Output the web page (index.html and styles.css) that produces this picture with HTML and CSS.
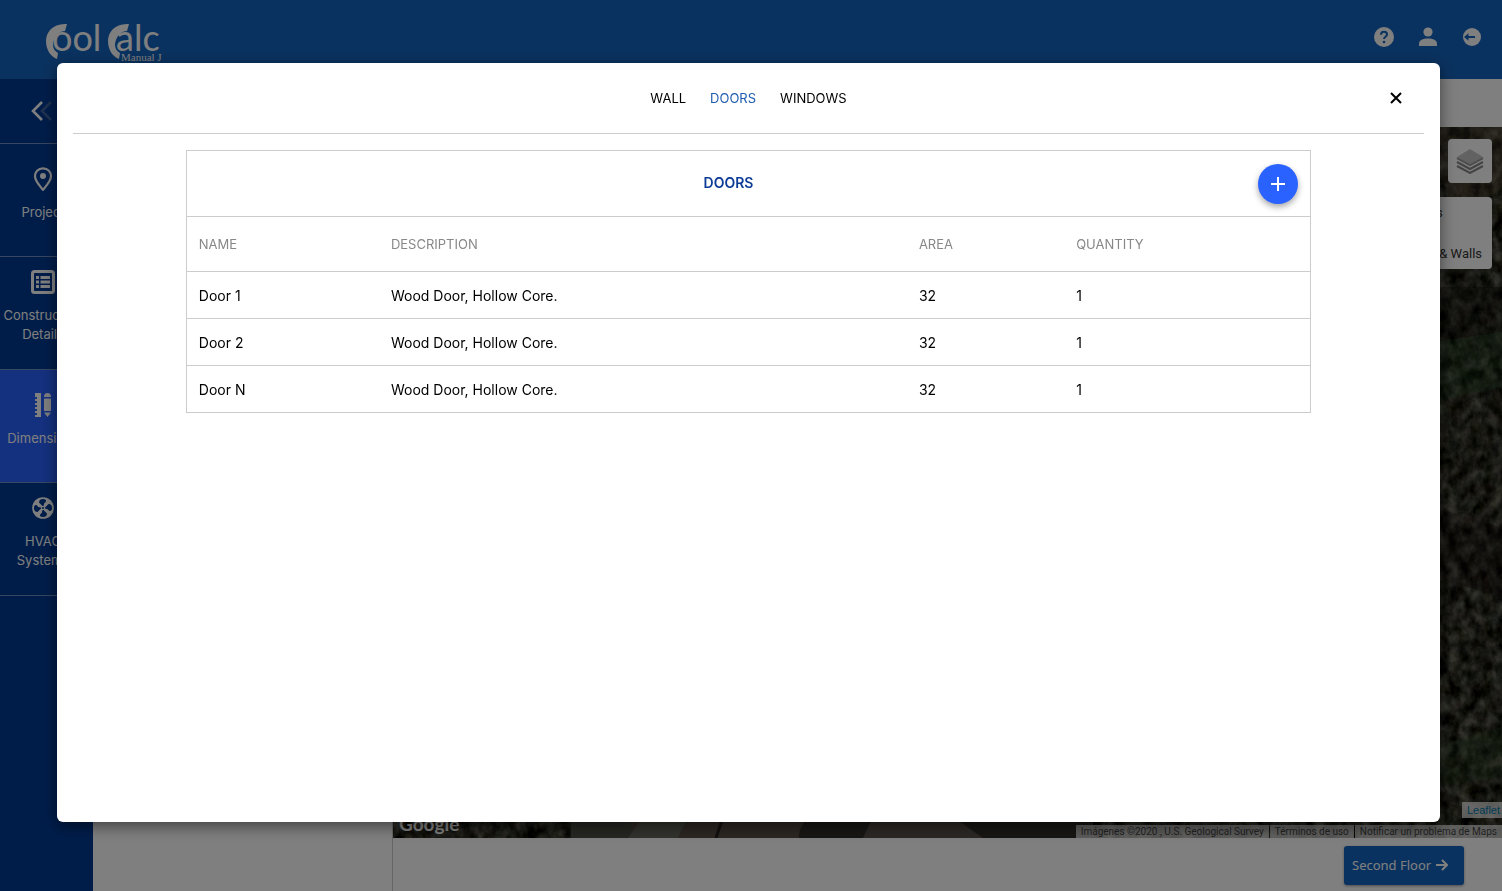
FILE: index.html
```html
<!DOCTYPE html>
<html lang="en">
<head>
  <meta charset="UTF-8" />
  <meta name="viewport" content="width=device-width, initial-scale=1.0" />
  <title>Cool Calc - Doors</title>
  <link rel="stylesheet" href="styles.css">
</head>
<body>
  <div class="app">
    <header class="topbar">
      <a class="logo" href="#" aria-label="Cool Calc Manual J">
        <svg width="130" height="60" viewBox="0 0 130 60">
          <path id="swoosh" d="M23 10C9 9 2 18 2 27C2 36 7 43 13 45L14 39C9 36 8 31 10 26C12 20 17 17 21 17Z" fill="#fff" />
          <use href="#swoosh" x="62" />
          <text class="logo-word" x="8" y="37">ool</text>
          <text class="logo-word" x="72" y="37">alc</text>
          <text class="logo-sub" x="77" y="47">Manual J</text>
        </svg>
      </a>
      <nav class="top-actions">
        <button class="icon-button" aria-label="Help">
          <svg width="20" height="20" viewBox="0 0 20 20">
            <circle cx="10" cy="10" r="10" fill="#fff" />
            <path d="M7 7.8C7 3.8 13 4 13 7.6C13 9.7 10 9.8 10 12" fill="none" stroke="#1565c0" stroke-width="2" />
            <circle cx="10" cy="15" r="1.3" fill="#1565c0" />
          </svg>
        </button>
        <button class="icon-button" aria-label="Account">
          <svg width="20" height="20" viewBox="0 0 20 20">
            <circle cx="10" cy="5" r="4.6" fill="#fff" />
            <path d="M1 19V17C1 13 5 11.500 10 11.500S19 13 19 17V19Z" fill="#fff" />
          </svg>
        </button>
        <button class="icon-button" aria-label="Log out">
          <svg width="20" height="20" viewBox="0 0 20 20">
            <circle cx="10" cy="10" r="9" fill="#fff" />
            <path d="M2 10L6.500 6.200V9H13V11H6.500V13.800Z" fill="#1565c0" />
          </svg>
        </button>
      </nav>
    </header>

    <div class="layout">
      <aside class="sidebar">
        <button class="collapse" aria-label="Collapse menu">
          <svg width="22" height="20" viewBox="0 0 22 20" fill="none" stroke-width="2.600">
            <path d="M20 1L11 10L20 19" stroke="#3f649f" />
            <path d="M11 1L2 10L11 19" stroke="#fff" />
          </svg>
        </button>
        <a class="side-item" href="#">
          <svg width="24" height="24" viewBox="0 0 24 24">
            <path d="M12 1.300C7 1.300 4 5 4 9.300C4 14 8.500 18.500 12 22.800C15.500 18.500 20 14 20 9.300C20 5 17 1.300 12 1.300Z" fill="none" stroke="#fff" stroke-width="2.200" />
            <circle cx="12" cy="9" r="3" fill="#fff" />
          </svg>
          <span>Project</span>
        </a>
        <a class="side-item" href="#">
          <svg width="24" height="24" viewBox="0 0 24 24" fill="none" stroke="#fff">
            <rect x="1.500" y="1.500" width="21" height="21" rx="2" stroke-width="3" />
            <path d="M5 7.500H8M5 12H8M5 16.500H8M9.500 7.500H19M9.500 12H19M9.500 16.500H19" stroke-width="3" />
          </svg>
          <span>Construction Details</span>
        </a>
        <a class="side-item active" href="#">
          <svg width="24" height="24" viewBox="0 0 24 24" fill="#fff">
            <path d="M4 0H10V24H4V22H6V20H4V18H6V16H4V14H6V12H4V10H6V8H4V6H6V4H4Z" />
            <path d="M13 4Q13 0 16.500 0T20 4ZM13 5.500H20V18H13ZM13 19.500H20L16.500 24Z" />
          </svg>
          <span>Dimensions</span>
        </a>
        <a class="side-item" href="#">
          <svg width="24" height="24" viewBox="0 0 24 24">
            <circle cx="12" cy="12" r="10.800" fill="#fff" />
            <g fill="#003a94">
              <path id="blade" d="M11.500 10L8 6.500Q8 3 12 3Q15.500 3 15 5.500Q12.500 7 12.500 10Z" />
              <use href="#blade" transform="rotate(90 12 12)" />
              <use href="#blade" transform="rotate(180 12 12)" />
              <use href="#blade" transform="rotate(270 12 12)" />
              <circle cx="12" cy="12" r="1" />
            </g>
          </svg>
          <span>HVAC Systems</span>
        </a>
      </aside>

      <section class="details"></section>

      <main class="workspace">
        <div class="toolbar"></div>
        <div class="map">
          <svg class="imagery" viewBox="0 0 1109 711" preserveAspectRatio="none">
            <filter id="ground" x="0" y="0" width="100%" height="100%" color-interpolation-filters="sRGB">
              <feTurbulence type="fractalNoise" baseFrequency="0.09 0.07" numOctaves="5" seed="8" />
              <feColorMatrix values="0.6 0.3 0 0 -0.27  0.6 0.25 0.05 0 -0.27  0.6 0.2 0 0 -0.26  0 0 0 0 1" />
            </filter>
            <rect width="1109" height="711" filter="url(#ground)" />
            <g opacity="0.3">
              <path d="M1040 0H1109V60L1070 90L1040 40Z" fill="#6e5a48" />
              <path d="M1040 160H1109V210L1040 225Z" fill="#000" />
              <path d="M1040 215L1109 205V260L1040 275Z" fill="#1d4a22" />
              <path d="M1040 380L1109 400V470L1040 450Z" fill="#180c0e" />
              <path d="M1040 620L1109 600V650L1040 660Z" fill="#284a26" />
            </g>
            <path d="M178 690H700V711H178Z" fill="#5a4d43" />
            <path d="M178 690H235L243 711H178Z" fill="#4b4c44" />
            <path d="M250 690H295L285 711H235Z" fill="#62625a" />
            <path d="M330 690L323 711" stroke="#25211d" stroke-width="3" />
            <path d="M406 711Q405 700 416 690H700V711Z" fill="#302d28" />
            <path d="M480 690H560L590 711H470Z" fill="#57504a" />
          </svg>
          <button class="layers" aria-label="Layers">
            <svg width="28" height="26" viewBox="0 0 28 26">
              <path d="M1 18L14 25L27 18M1 14L14 21L27 14" fill="none" stroke="#888" stroke-width="2" />
              <path d="M1 10L14 17L27 10" fill="none" stroke="#999" stroke-width="2" />
              <path d="M14 1L27 9L14 16L1 9Z" fill="#c4c4c4" />
            </svg>
          </button>
          <div class="legend">
            <span>Floors</span>
            <span>Floor &amp; Walls</span>
          </div>
          <span class="google">Google</span>
          <a class="leaflet" href="#">Leaflet</a>
          <div class="attribution">
            <span>Imágenes ©2020 , U.S. Geological Survey</span>
            <a href="#">Términos de uso</a>
            <a href="#">Notificar un problema de Maps</a>
          </div>
        </div>
        <footer class="actions">
          <button class="next-button">
            Second Floor
            <svg width="12" height="12" viewBox="0 0 12 12" fill="none" stroke="#fff" stroke-width="2">
              <path d="M0 6H11M6 1L11 6L6 11" />
            </svg>
          </button>
        </footer>
      </main>
    </div>
  </div>

  <div class="overlay">
    <div class="modal" role="dialog" aria-modal="true" aria-label="Doors">
      <div class="modal-header">
        <nav class="tabs">
          <a href="#">WALL</a>
          <a class="selected" href="#">DOORS</a>
          <a href="#">WINDOWS</a>
        </nav>
        <button class="close" aria-label="Close">
          <svg width="12" height="12" viewBox="0 0 12 12" fill="none" stroke="#000" stroke-width="2">
            <path d="M1 1L11 11M11 1L1 11" />
          </svg>
        </button>
      </div>

      <div class="card">
        <div class="card-header">
          <h2>DOORS</h2>
          <button class="add" aria-label="Add door">
            <svg width="14" height="14" viewBox="0 0 14 14" stroke="#fff" stroke-width="2">
              <path d="M7 0V14M0 7H14" />
            </svg>
          </button>
        </div>
        <table class="doors">
          <thead>
            <tr>
              <th class="col-name">NAME</th>
              <th class="col-description">DESCRIPTION</th>
              <th class="col-area">AREA</th>
              <th>QUANTITY</th>
            </tr>
          </thead>
          <tbody>
            <tr>
              <td>Door 1</td>
              <td>Wood Door, Hollow Core.</td>
              <td>32</td>
              <td>1</td>
            </tr>
            <tr>
              <td>Door 2</td>
              <td>Wood Door, Hollow Core.</td>
              <td>32</td>
              <td>1</td>
            </tr>
            <tr>
              <td>Door N</td>
              <td>Wood Door, Hollow Core.</td>
              <td>32</td>
              <td>1</td>
            </tr>
          </tbody>
        </table>
      </div>
    </div>
  </div>
</body>
</html>
```

FILE: styles.css
```css
* {
  margin: 0;
  padding: 0;
  box-sizing: border-box;
}

body {
  font-family: Inter, sans-serif;
  font-size: 14px;
  color: #000;
  background: #fff;
  overflow: hidden;
}

a {
  color: inherit;
  text-decoration: none;
}

button {
  font: inherit;
  color: inherit;
  background: none;
  border: none;
  cursor: pointer;
}

svg {
  display: block;
}

.app {
  display: flex;
  flex-direction: column;
  height: 100vh;
}

/* top bar */
.topbar {
  display: flex;
  justify-content: space-between;
  padding: 14px 20px 0 44px;
  height: 79px;
  background: #1565c0;
}

.logo-word {
  font-family: Lato, sans-serif;
  font-size: 36px;
  fill: #fff;
}

.logo-sub {
  font-family: "Liberation Serif", serif;
  font-size: 11px;
  fill: #fff;
}

.top-actions {
  display: flex;
  align-items: center;
  gap: 24px;
  height: 46px;
}

/* sidebar */
.layout {
  display: flex;
  flex: 1;
  min-height: 0;
}

.sidebar {
  width: 93px;
  background: #003a94;
  color: #fff;
}

.collapse {
  display: flex;
  align-items: center;
  width: 100%;
  height: 65px;
  padding-left: 31px;
  border-bottom: 1px solid #6f8fc0;
}

.side-item {
  display: flex;
  flex-direction: column;
  align-items: center;
  justify-content: center;
  gap: 12px;
  height: 113px;
  padding: 0 7px 12px 0;
  border-bottom: 1px solid #6f8fc0;
  font-size: 13px;
  line-height: 19px;
  text-align: center;
}

.side-item.active {
  background: #2962ff;
}

.details {
  width: 300px;
  border-right: 1px solid #ccc;
}

/* map */
.workspace {
  display: flex;
  flex-direction: column;
  flex: 1;
}

.toolbar {
  height: 48px;
}

.map {
  position: relative;
  flex: 1;
  overflow: hidden;
  background: #34332d;
}

.imagery {
  position: absolute;
  width: 100%;
  height: 100%;
}

.layers {
  position: absolute;
  top: 12px;
  right: 10px;
  display: grid;
  place-items: center;
  width: 44px;
  height: 44px;
  background: #fff;
  border-radius: 4px;
}

.legend {
  position: absolute;
  top: 70px;
  right: 10px;
  display: flex;
  flex-direction: column;
  justify-content: space-between;
  height: 72px;
  padding: 7px 10px 6px;
  background: #fff;
  border-radius: 4px;
  font-family: Roboto, sans-serif;
  font-size: 13px;
  line-height: 18px;
  color: #333;
}

.google {
  position: absolute;
  left: 6px;
  bottom: 3px;
  font-family: Lato, sans-serif;
  font-size: 19px;
  font-weight: bold;
  line-height: 22px;
  color: #fff;
}

.leaflet {
  position: absolute;
  right: 0;
  bottom: 20px;
  padding: 0 2px 0 5px;
  background: rgba(255, 255, 255, 0.7);
  font-family: "Liberation Sans", sans-serif;
  font-size: 11px;
  line-height: 16px;
  color: #0078a8;
}

.attribution {
  position: absolute;
  right: 0;
  bottom: 0;
  display: flex;
  gap: 1px;
  font-family: Roboto, sans-serif;
  font-size: 10px;
  line-height: 13px;
  color: #444;
}

.attribution > * {
  padding: 0 5px;
  background: rgba(245, 245, 245, 0.7);
}

.actions {
  display: flex;
  justify-content: flex-end;
  height: 53px;
  padding: 8px 38px 6px;
}

.next-button {
  display: flex;
  align-items: center;
  gap: 5px;
  width: 120px;
  padding: 0 8px 2px;
  background: #1565c0;
  border-radius: 3px;
  box-shadow: 0 1px 3px rgba(0, 0, 0, 0.4);
  font-family: "Noto Sans", sans-serif;
  font-size: 13px;
  color: #fff;
  white-space: nowrap;
}

/* modal */
.overlay {
  position: fixed;
  inset: 0;
  display: flex;
  padding: 63px 62px 69px 57px;
  background: rgba(0, 0, 0, 0.5);
}

.modal {
  flex: 1;
  padding: 0 16px;
  background: #fff;
  border-radius: 6px;
  box-shadow: 0 4px 16px rgba(0, 0, 0, 0.5);
}

.modal-header {
  display: grid;
  grid-template-columns: 1fr auto 1fr;
  align-items: center;
  height: 71px;
  border-bottom: 1px solid #ccc;
}

.tabs {
  display: flex;
  grid-column: 2;
  gap: 24px;
  font-size: 13px;
}

.tabs .selected {
  color: #1f5cb0;
}

.close {
  justify-self: end;
  padding: 8px;
  margin-right: 14px;
}

.card {
  width: 83.3%;
  margin: 16px auto 0;
  border: 1px solid #ccc;
  border-bottom: none;
}

.card-header {
  display: flex;
  align-items: center;
  height: 66px;
  padding: 0 12px;
  border-bottom: 1px solid #ccc;
}

.card-header h2 {
  flex: 1;
  padding-bottom: 2px;
  font-size: 14px;
  font-weight: 600;
  text-align: center;
  color: #0d3c97;
}

.add {
  display: grid;
  place-items: center;
  width: 40px;
  height: 40px;
  border-radius: 50%;
  background: #2962ff;
  box-shadow: 0 3px 6px rgba(0, 0, 0, 0.35);
}

.doors {
  width: 100%;
  border-spacing: 0;
  table-layout: fixed;
}

.doors th,
.doors td {
  height: 47px;
  padding: 0 12px;
  border-bottom: 1px solid #ccc;
  text-align: left;
}

.doors th {
  height: 55px;
  font-size: 13px;
  font-weight: normal;
  color: #888;
}

.col-name {
  width: 17.1%;
}

.col-description {
  width: 47%;
}

.col-area {
  width: 14%;
}
```
